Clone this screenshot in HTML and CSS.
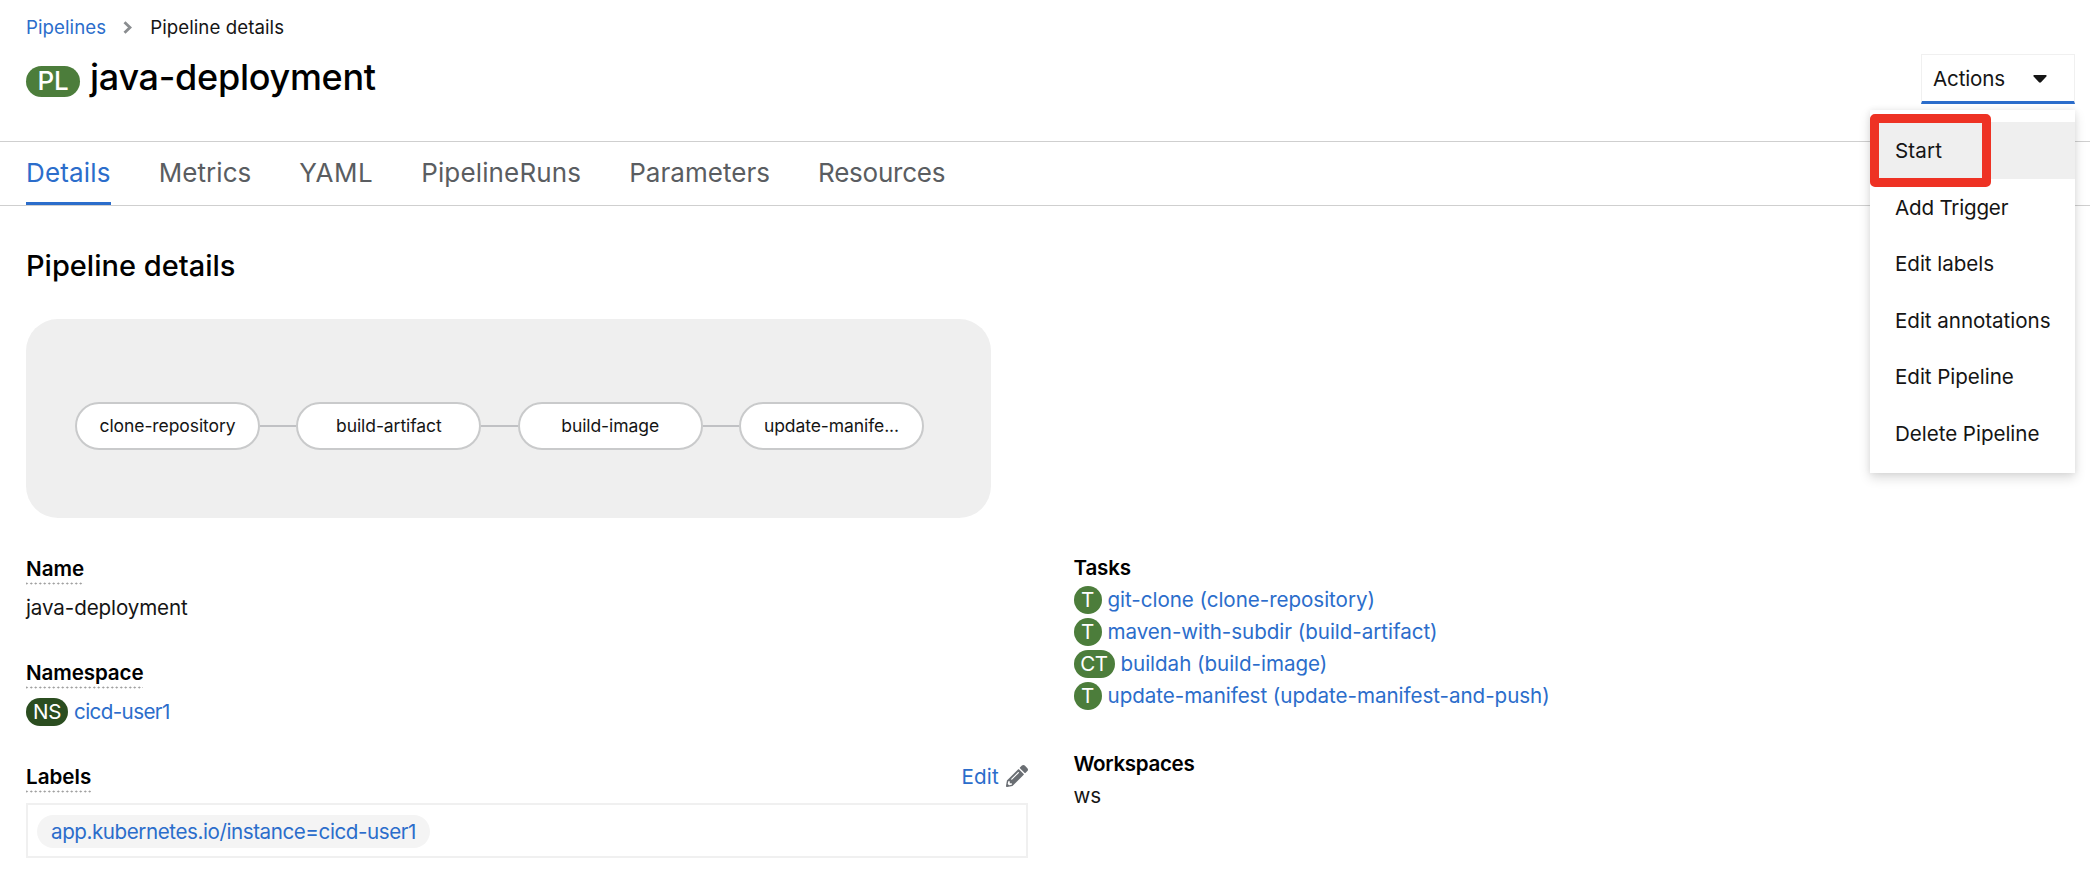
FILE: index.html
```html
<!DOCTYPE html>
<html lang="en">
<head>
<meta charset="utf-8">
<title>java-deployment · Pipeline details</title>
<link rel="stylesheet" href="styles.css">
</head>
<body>
<header class="header">
  <nav class="crumbs">
    <a class="link">Pipelines</a>
    <svg class="crumb-sep" width="9" height="13" viewBox="0 0 9 13"><path d="M1.5 1.2 7 6.5 1.5 11.8" fill="none" stroke="#8a8d90" stroke-width="2.8"/></svg>
    <span>Pipeline details</span>
  </nav>
  <div class="title-row">
    <h1 class="title"><span class="badge badge-lg">PL</span><span>java-deployment</span></h1>
    <div class="actions">
      <button class="toggle"><span>Actions</span><svg width="14" height="8" viewBox="0 0 14 8"><path d="M1.2 0h11.6c.8 0 1.2.9.6 1.5L8 7.2c-.6.6-1.4.6-2 0L.6 1.5C0 .9.4 0 1.2 0z" fill="#151515"/></svg></button>
      <ul class="menu">
        <li class="item active">Start<span class="highlight"></span></li>
        <li class="item tight">Add Trigger</li>
        <li class="item">Edit labels</li>
        <li class="item">Edit annotations</li>
        <li class="item">Edit Pipeline</li>
        <li class="item">Delete Pipeline</li>
      </ul>
    </div>
  </div>
</header>
<nav class="tabs">
  <a class="tab current">Details</a>
  <a class="tab">Metrics</a>
  <a class="tab tab-yaml">YAML</a>
  <a class="tab tab-runs">PipelineRuns</a>
  <a class="tab">Parameters</a>
  <a class="tab tab-res">Resources</a>
</nav>
<main class="main">
  <h2 class="section-title">Pipeline details</h2>
  <div class="graph">
    <div class="node">clone-repository</div><i class="edge"></i>
    <div class="node">build-artifact</div><i class="edge"></i>
    <div class="node">build-image</div><i class="edge"></i>
    <div class="node">update-manife...</div>
  </div>
  <div class="columns">
    <dl class="left">
      <dt class="term"><span class="dotted">Name</span></dt>
      <dd class="value">java-deployment</dd>
      <dt class="term"><span class="dotted wide">Namespace</span></dt>
      <dd class="value"><span class="badge badge-ns">NS</span><a class="link project">cicd-user1</a></dd>
      <dt class="term"><span class="dotted">Labels</span>
        <a class="link edit">Edit<svg width="22" height="22" viewBox="0 0 512 512"><path fill="#6a6e73" d="M497.9 142.1l-46.1 46.1c-4.7 4.7-12.300 4.700-17 0l-111-111c-4.700-4.700-4.700-12.300 0-17l46.100-46.100c18.700-18.700 49.100-18.700 67.900 0l60.100 60.100c18.800 18.700 18.800 49.100 0 67.900zM284.200 99.800L21.600 362.400.400 483.900c-2.900 16.400 11.400 30.600 27.800 27.800l121.500-21.300 262.600-262.600c4.700-4.700 4.700-12.300 0-17l-111-111c-4.800-4.700-12.400-4.700-17.100 0zM124.100 339.900c-5.500-5.500-5.500-14.300 0-19.800l154-154c5.500-5.500 14.300-5.500 19.800 0s5.500 14.300 0 19.800l-154 154c-5.500 5.500-14.300 5.500-19.800 0zM88 424h48v36.300l-64.500 11.300-31.100-31.100L51.700 376H88v48z"/></svg></a>
      </dt>
      <dd class="labels"><a class="chip link">app.kubernetes.io/instance=cicd-user1</a></dd>
    </dl>
    <div class="right">
      <div class="row head">Tasks</div>
      <div class="row"><span class="badge">T</span><a class="link">git-clone (clone-repository)</a></div>
      <div class="row"><span class="badge">T</span><a class="link">maven-with-subdir (build-artifact)</a></div>
      <div class="row"><span class="badge badge-ct">CT</span><a class="link">buildah (build-image)</a></div>
      <div class="row"><span class="badge">T</span><a class="link">update-manifest (update-manifest-and-push)</a></div>
      <div class="row head spaced">Workspaces</div>
      <div class="row">ws</div>
    </div>
  </div>
</main>
</body>
</html>
```
FILE: styles.css
```css
* { box-sizing: border-box; margin: 0; padding: 0; }
body {
  background: #fff;
  color: #151515;
  font: 20.6px/32px Inter, "Liberation Sans", sans-serif;
  height: 888px;
  overflow: hidden;
}
ul { list-style: none; }
.link { color: #2b6dcb; }

.header { height: 141px; padding: 14px 15px 0 26px; }
.crumbs { display: flex; align-items: center; height: 28px; font-size: 18.67px; letter-spacing: .07px; }
.crumb-sep { margin: 0 18px 0 17px; position: relative; top: -1px; }
.title-row { display: flex; justify-content: space-between; margin-top: 12px; height: 50px; }
.title {
  display: flex; align-items: center; gap: 10px; padding-bottom: 4px;
  color: #000; font-size: 36px; font-weight: 500; letter-spacing: -.28px;
}
.badge {
  display: inline-flex; align-items: center; justify-content: center;
  flex: none; width: 28px; height: 28px; border-radius: 14px;
  background: #4c7d3b; color: #fff; letter-spacing: -.4px;
}
.badge-lg { width: 54px; height: 31px; border-radius: 16px; margin-top: 8px; font-size: 26px; letter-spacing: -.3px; }
.badge-ct { width: 41px; }
.badge-ns { width: 42px; background: #2b4d20; }

.actions { position: relative; width: 154px; }
.toggle {
  display: flex; align-items: center; justify-content: space-between;
  width: 154px; height: 50px; padding: 2px 27px 0 11px;
  border: 1px solid #f0f0f0; border-bottom: 3px solid #2b6dcb;
  background: #fff; color: #151515; font: inherit; letter-spacing: -.15px;
}
.menu {
  position: absolute; right: 0; top: 56px; z-index: 2;
  width: 205px; height: 363px; padding: 12px 0;
  background: #fff; box-shadow: 0 5px 11px rgba(3, 3, 3, .14), 0 0 6px rgba(3, 3, 3, .07);
}
.item { position: relative; height: 56.5px; padding-left: 25px; line-height: 58px; letter-spacing: -.05px; white-space: nowrap; }
.tight { letter-spacing: -.2px; }
.active { background: #efefef; letter-spacing: .15px; }
.highlight {
  position: absolute; left: 0; top: -8px; width: 121px; height: 73px;
  border: 9px solid #ee3224; border-radius: 5px;
}

.tabs {
  display: flex; gap: 48px; height: 65px; padding-left: 26px;
  border-top: 1px solid #cfcfcf; border-bottom: 1px solid #cfcfcf;
  color: #5a5d61; font-size: 26px;
}
.tab { padding-top: 11px; line-height: 40px; letter-spacing: .05px; }
.current { color: #2b6dcb; border-bottom: 3px solid #2b6dcb; letter-spacing: .18px; }
.tab-yaml { letter-spacing: .5px; }
.tab-runs { letter-spacing: .14px; }
.tab-res { letter-spacing: -.25px; }

.main { padding: 40px 26px 0; }
.section-title { height: 40px; line-height: 40px; color: #000; font-size: 29px; font-weight: 500; }
.graph {
  display: flex; align-items: center; width: 965px; height: 199px;
  margin-top: 33px; padding: 15px 49px 0; border-radius: 32px; background: #efefef;
}
.node {
  width: 185px; height: 48px; border: 2px solid #c9cacb; border-radius: 24px;
  background: #fff; text-align: center; font-size: 17.5px; line-height: 43px; letter-spacing: -.08px;
}
.edge { width: 36.33px; height: 2px; background: #c0c1c4; }

.columns { display: flex; margin-top: 34px; }
.left { width: 1002px; padding-top: 1px; }
.term { display: flex; justify-content: space-between; height: 31px; color: #000; font-weight: 600; }
.dotted {
  height: 32px;
  background: radial-gradient(circle, #999 .8px, transparent 1.2px) 3px 100% / 4.5px 3px repeat-x;
}
.wide { letter-spacing: -.12px; }
.value { display: flex; align-items: center; gap: 6px; height: 73px; padding: 3px 0 28px; letter-spacing: -.12px; }
.project { letter-spacing: -.6px; }
.edit { display: flex; align-items: center; gap: 7px; height: 32px; font-weight: 400; letter-spacing: .2px; }
.edit svg { position: relative; top: -1px; }
.labels { height: 55px; margin-top: 11px; padding: 10px 9px; border: 2px solid #f0f0f0; }
.chip {
  display: inline-block; height: 33px; padding: 0 14px; border-radius: 17px;
  background: #f4f4f4; line-height: 33px; letter-spacing: -.43px; vertical-align: top;
}
.right { padding-left: 45.5px; }
.row { display: flex; align-items: center; gap: 6px; height: 32px; letter-spacing: -.05px; }
.head { color: #000; font-weight: 600; letter-spacing: -.15px; }
.spaced { margin-top: 36px; letter-spacing: -.35px; }
```
